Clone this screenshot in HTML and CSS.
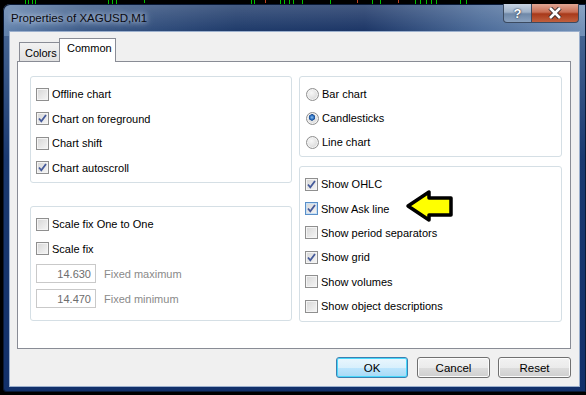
FILE: index.html
```html
<!DOCTYPE html>
<html lang="en">

<head>
  <meta charset="UTF-8" />
  <title>Properties of XAGUSD,M1</title>
  <link rel="stylesheet" href="styles.css">
</head>

<body>
  <svg class="chart-strip" width="586" height="4">
    <g stroke="#00c000" stroke-width="1">
      <line x1="25.5" y1="0" x2="25.5" y2="4" /><line x1="28.5" y1="0" x2="28.5" y2="4" />
      <line x1="32.5" y1="0" x2="32.5" y2="4" /><line x1="35.5" y1="0" x2="35.5" y2="4" />
      <line x1="108.5" y1="0" x2="108.5" y2="4" /><line x1="112.5" y1="0" x2="112.5" y2="4" />
      <line x1="116.5" y1="0" x2="116.5" y2="4" /><line x1="144.5" y1="0" x2="144.5" y2="3" />
      <line x1="251.5" y1="0" x2="251.5" y2="4" /><line x1="254.5" y1="0" x2="254.5" y2="4" />
      <line x1="280.5" y1="0" x2="280.5" y2="4" /><line x1="284.5" y1="0" x2="284.5" y2="4" />
      <line x1="289.5" y1="0" x2="289.5" y2="4" /><line x1="293.5" y1="0" x2="293.5" y2="4" />
      <line x1="302.5" y1="0" x2="302.5" y2="4" /><line x1="330.5" y1="0" x2="330.5" y2="4" />
      <line x1="372.5" y1="0" x2="372.5" y2="4" /><line x1="380.5" y1="0" x2="380.5" y2="4" />
      <line x1="415.5" y1="0" x2="415.5" y2="4" /><line x1="420.5" y1="0" x2="420.5" y2="4" />
      <line x1="426.5" y1="0" x2="426.5" y2="4" /><line x1="431.5" y1="0" x2="431.5" y2="4" />
      <line x1="436.5" y1="0" x2="436.5" y2="4" /><line x1="460.5" y1="0" x2="460.5" y2="4" />
      <line x1="466.5" y1="0" x2="466.5" y2="4" />
    </g>
    <g stroke="#c04020" stroke-width="1">
      <line x1="265.5" y1="0" x2="265.5" y2="3" /><line x1="357.5" y1="0" x2="357.5" y2="3" />
      <line x1="398.5" y1="0" x2="398.5" y2="3" />
    </g>
  </svg>

  <div class="window">
    <div class="titlebar">
      <span class="title">Properties of XAGUSD,M1</span>
      <div class="caption-buttons">
        <span class="cap-btn help">?</span>
        <span class="cap-btn close">
          <svg width="14" height="12" viewBox="0 0 14 12">
            <path d="M2 1 L12 11 M12 1 L2 11" stroke="#3a2a2a" stroke-width="4.5" />
            <path d="M2 1 L12 11 M12 1 L2 11" stroke="#ffffff" stroke-width="2.6" />
          </svg>
        </span>
      </div>
    </div>

    <div class="client">
      <div class="tabs">
        <span class="tab">Colors</span>
        <span class="tab active">Common</span>
      </div>

      <div class="panel">
        <div class="col">
          <div class="group g-main">
            <label class="row"><span class="check"></span>Offline chart</label>
            <label class="row"><span class="check on"></span>Chart on foreground</label>
            <label class="row"><span class="check"></span>Chart shift</label>
            <label class="row"><span class="check on"></span>Chart autoscroll</label>
          </div>
          <div class="group g-scale">
            <label class="row"><span class="check"></span>Scale fix One to One</label>
            <label class="row"><span class="check"></span>Scale fix</label>
            <div class="row field"><span class="num">14.630</span><span class="muted">Fixed maximum</span></div>
            <div class="row field"><span class="num">14.470</span><span class="muted">Fixed minimum</span></div>
          </div>
        </div>

        <div class="col">
          <div class="group g-type">
            <label class="row radio-row"><span class="radio"></span>Bar chart</label>
            <label class="row radio-row"><span class="radio on"></span>Candlesticks</label>
            <label class="row radio-row"><span class="radio"></span>Line chart</label>
          </div>
          <div class="group g-show">
            <label class="row radio-row"><span class="check on"></span>Show OHLC</label>
            <label class="row radio-row"><span class="check on focus"></span>Show Ask line</label>
            <label class="row radio-row"><span class="check"></span>Show period separators</label>
            <label class="row radio-row"><span class="check on"></span>Show grid</label>
            <label class="row radio-row"><span class="check"></span>Show volumes</label>
            <label class="row radio-row"><span class="check"></span>Show object descriptions</label>
          </div>
        </div>

        <!-- pointer drawn over the dialog -->
        <svg class="arrow" width="50" height="34" viewBox="0 0 50 34">
          <path d="M3 17 L24 3 L24 9 L46 9 L46 26 L24 26 L24 31 Z" fill="#ffff00" stroke="#000" stroke-width="3.5" stroke-linejoin="round" />
        </svg>
      </div>

      <div class="buttons">
        <button class="btn default">OK</button>
        <button class="btn">Cancel</button>
        <button class="btn">Reset</button>
      </div>
    </div>
  </div>
</body>

</html>
```

FILE: styles.css
```css
body {
  margin: 0;
  width: 586px;
  height: 395px;
  overflow: hidden;
  background-color: #000;
  font-family: "Liberation Sans", Arial, sans-serif;
  font-size: 11px;
  color: #000;
}

.chart-strip {
  display: block;
}

.window {
  margin-left: 3px;
  width: 583px;
  height: 388px;
  box-sizing: border-box;
  padding: 0 7px 6px 7px;
  border-radius: 7px 0 0 4px;
  box-shadow: inset 0 0 0 1px #0a1a38;
  background:
    linear-gradient(to bottom, rgba(255, 255, 255, 0.18), rgba(255, 255, 255, 0) 28px),
    linear-gradient(to right, #6383ad 0%, #3c5a88 14%, #1e3a6a 40%, #1b3566 62%, #4a6a98 82%, #7391b8 100%) top / 100% 32px no-repeat,
    linear-gradient(to bottom, #4f6e9a 0%, #1a3970 40%, #12306a 100%);
}

.titlebar {
  height: 28px;
  display: flex;
  justify-content: space-between;
  align-items: flex-start;
}

.title {
  margin-left: 1px;
  margin-top: 8px;
  font-size: 11.5px;
  color: #0a0a10;
  text-shadow: 0 0 5px #c8d6ea, 0 0 9px #c8d6ea;
}

.caption-buttons {
  display: flex;
  height: 19px;
}

.cap-btn {
  display: flex;
  align-items: center;
  justify-content: center;
  height: 19px;
  box-sizing: border-box;
  border: 1px solid #3b4a60;
  border-top: none;
}

.help {
  width: 29px;
  border-radius: 0 0 0 4px;
  background: linear-gradient(to bottom, #c7d3e2 0%, #9fb2c9 45%, #6f88a8 55%, #8aa2c0 100%);
  color: #fff;
  font-weight: bold;
  font-size: 13px;
  text-shadow: 0 0 2px #2a3548, 0 0 1px #2a3548;
}

.close {
  width: 47px;
  border-left: none;
  border-radius: 0 0 4px 0;
  background: linear-gradient(to bottom, #e0a694 0%, #c96f55 45%, #a8391a 55%, #c0603e 100%);
}

.client {
  height: 354px;
  box-sizing: border-box;
  padding: 6px 8px 0 7px;
  background-color: #f0f0f0;
  box-shadow: 0 0 0 1px #9cb0cd;
}

.tabs {
  height: 23px;
  display: flex;
  align-items: flex-end;
  padding-left: 2px;
}

.tab {
  width: 42px;
  height: 19px;
  box-sizing: border-box;
  border: 1px solid #898c95;
  border-bottom: none;
  background: linear-gradient(to bottom, #f2f2f2, #e1e1e1);
  padding: 4px 0 0 5px;
}

.tab.active {
  position: relative;
  z-index: 1;
  width: 57px;
  height: 24px;
  margin-left: -2px;
  margin-bottom: -1px;
  background: #fff;
  padding: 3px 0 0 7px;
}

.panel {
  position: relative;
  height: 288px;
  box-sizing: border-box;
  border: 1px solid #898c95;
  background-color: #fff;
  display: grid;
  grid-template-columns: 262px 263px;
  column-gap: 7px;
  align-items: start;
  padding: 14px 0 0 12px;
}

.col {
  display: flex;
  flex-direction: column;
}

.group {
  box-sizing: border-box;
  border: 1px solid #d5dfe5;
  border-radius: 3px;
  padding: 5px 0 0 5px;
}

.g-main {
  height: 107px;
}

.g-scale {
  height: 115px;
  margin-top: 23px;
}

.g-type {
  height: 81px;
  padding-left: 6px;
}

.g-show {
  height: 156px;
  margin-top: 9px;
}

.row {
  display: flex;
  align-items: center;
  height: 24.5px;
}

.radio-row {
  height: 24.4px;
}

.g-type .row {
  height: 24px;
}

.check,
.radio {
  width: 13px;
  height: 13px;
  box-sizing: border-box;
  border: 1px solid #8f8f8f;
  background: linear-gradient(135deg, #d6d6d6, #f6f6f6);
  box-shadow: inset 0 0 0 1px #f4f4f4;
  margin-right: 3px;
  flex: none;
}

.check.on {
  background:
    url("data:image/svg+xml,%3Csvg xmlns='http://www.w3.org/2000/svg' width='11' height='11'%3E%3Cpath d='M2 5.5 L4.3 8.3 L9 2' fill='none' stroke='%23455a9a' stroke-width='1.8'/%3E%3C/svg%3E") center no-repeat,
    linear-gradient(135deg, #d6d6d6, #f6f6f6);
}

.check.focus {
  border-color: #5a8fc8;
  box-shadow: inset 0 0 0 1px #c8e0f6;
}

.radio {
  border-radius: 50%;
  background: radial-gradient(circle at 40% 35%, #f8f8f8, #cfcfcf);
}

.radio.on {
  background:
    radial-gradient(circle at 45% 40%, #8cc2f0 0, #2d6fc0 2px, #1a4a8c 3px, transparent 3.5px),
    radial-gradient(circle at 40% 35%, #f8f8f8, #cfcfcf);
}

.field {
  height: 25px;
}

.num {
  width: 60px;
  height: 19px;
  box-sizing: border-box;
  border: 1px solid #c9c9c9;
  background-color: #fff;
  color: #6d6d6d;
  text-align: right;
  padding: 3px 4px 0 0;
  margin-right: 8px;
}

.muted {
  color: #8a8a8a;
}

.arrow {
  position: absolute;
  left: 387px;
  top: 127px;
}

.buttons {
  display: flex;
  justify-content: flex-end;
  gap: 8px;
  margin-top: 8px;
}

.btn {
  width: 73px;
  height: 21px;
  border: 1px solid #707070;
  border-radius: 3px;
  background: linear-gradient(to bottom, #f2f2f2 0%, #ebebeb 50%, #dddddd 50%, #cfcfcf 100%);
  box-shadow: inset 0 0 0 1px #fcfcfc;
  font-family: "Liberation Sans", Arial, sans-serif;
  font-size: 11.5px;
  color: #000;
  padding: 0;
}

.btn.default {
  width: 72px;
  margin-right: 1px;
  border-color: #3c7fb1;
  box-shadow: inset 0 0 0 1px #48d8fb;
  background: linear-gradient(to bottom, #eaf6fd 0%, #d9f0fc 50%, #bee6fd 50%, #a7d9f5 100%);
}
```
